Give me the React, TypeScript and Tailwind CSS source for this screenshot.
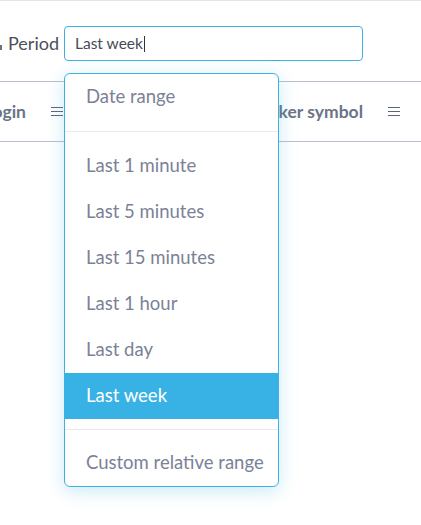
import React from "react";

const Hamburger = () => (
  <div className="flex flex-col gap-[2.5px] w-[12px]">
    <span className="block h-[1.5px] bg-[#5d6579]" />
    <span className="block h-[1.5px] bg-[#5d6579]" />
    <span className="block h-[1.5px] bg-[#5d6579]" />
  </div>
);

const items = [
  "Last 1 minute",
  "Last 5 minutes",
  "Last 15 minutes",
  "Last 1 hour",
  "Last day",
  "Last week",
];

export default function App() {
  return (
    <div
      className="relative w-[421px] h-[525px] bg-white overflow-hidden border-t border-[#e4e5ea]"
      style={{ fontFamily: "Lato, 'Noto Sans', sans-serif" }}
    >
      <div className="flex items-center h-[35px] mt-[25px]">
        <span className="w-[2px] h-[5px] bg-[#6b7280] mt-[8px]" />
        <span className="ml-[6px] text-[18px] text-[#4a505c] w-[56px]">Period</span>
        <div className="flex items-center w-[299px] h-[35px] border border-[#3db1e4] rounded-[4px] pl-[10px]">
          <span className="text-[15.5px] text-[#454b57]">Last week</span>
          <span className="w-px h-[16px] bg-[#333] ml-[1px]" />
        </div>
      </div>
      <div className="mt-[20px] h-[61px] border-y border-[#bbbecd] flex items-center">
        <div className="w-[26px] overflow-hidden flex justify-end whitespace-nowrap mt-[2px]">
          <span className="text-[17.5px] font-bold text-[#6b7387]">Login</span>
        </div>
        <div className="ml-[25px]">
          <Hamburger />
        </div>
        <div className="ml-auto flex items-center whitespace-nowrap">
          <span className="text-[17.5px] font-bold text-[#6b7387] mt-[2px]">Marker symbol</span>
          <div className="ml-[25px] mr-[21px]">
            <Hamburger />
          </div>
        </div>
      </div>

      <div className="absolute left-[64px] top-[72px] w-[215px] bg-white border border-[#3db1e4] rounded-[6px] shadow-[0_4px_18px_rgba(56,178,227,0.28)] overflow-hidden">
        <div className="h-[46px] flex items-center pl-[21px] text-[18.5px] text-[#7b8296]">Date range</div>
        <div className="my-[11px] h-px bg-[#e9eaee]" />
        {items.map((it) => (
          <div
            key={it}
            className={
              it === "Last week"
                ? "h-[46px] flex items-center pl-[21px] text-[18.5px] text-white bg-[#38b2e4]"
                : "h-[46px] flex items-center pl-[21px] text-[18.5px] text-[#7b8296]"
            }
          >
            {it}
          </div>
        ))}
        <div className="my-[10px] h-px bg-[#e9eaee]" />
        <div className="h-[46px] flex items-center pl-[21px] text-[18.5px] text-[#7b8296]">Custom relative range</div>
      </div>
    </div>
  );
}
